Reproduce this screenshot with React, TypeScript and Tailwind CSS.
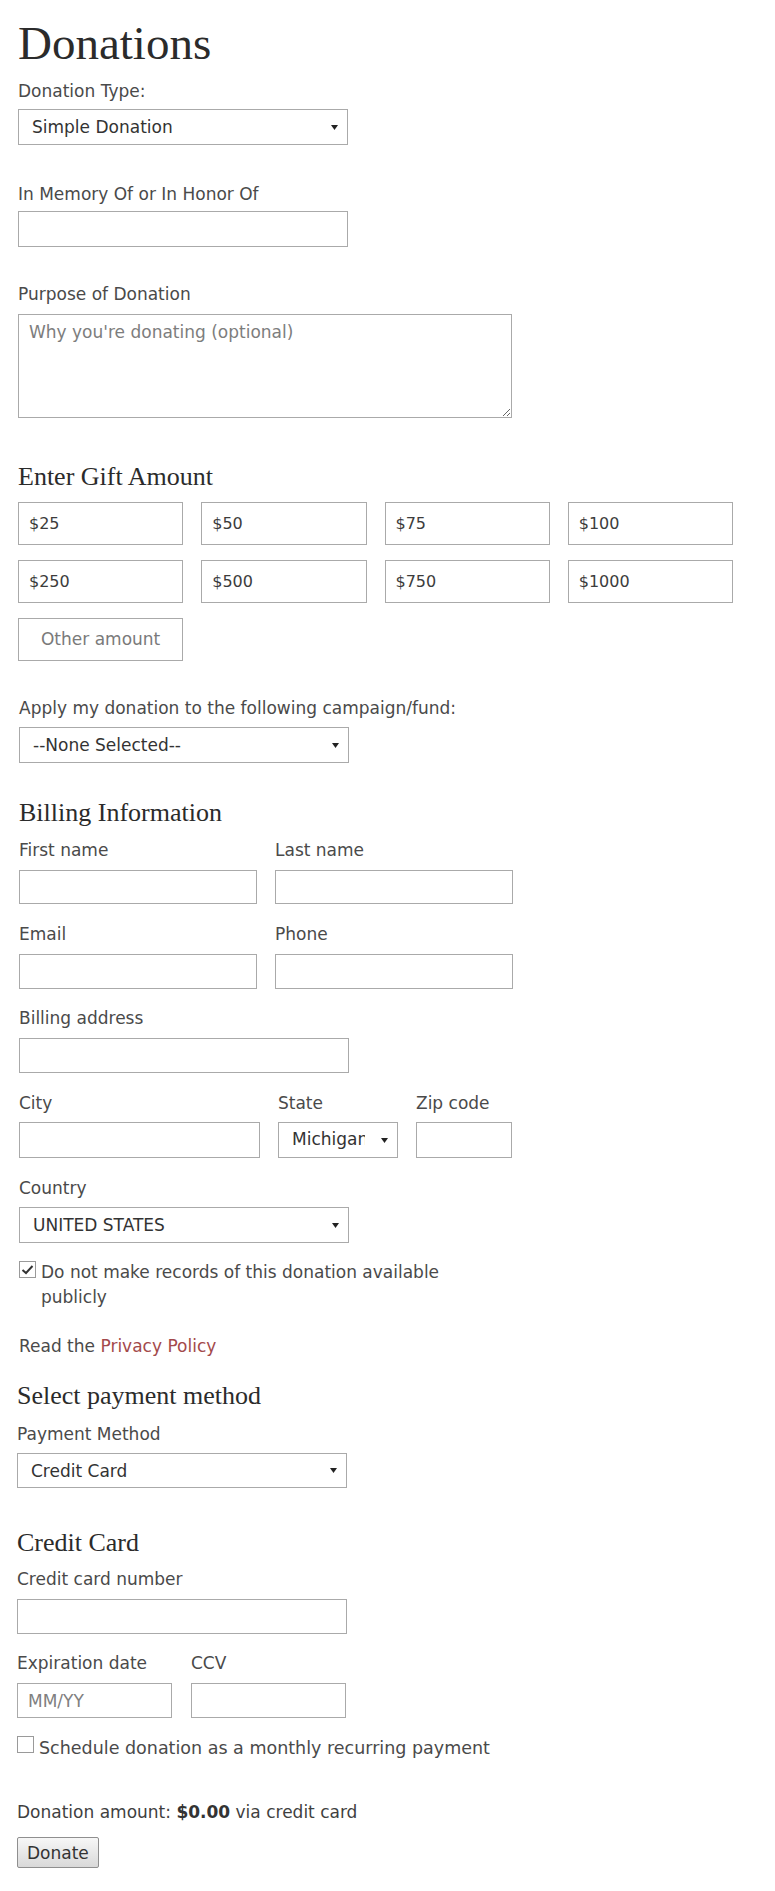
import React from "react";

const labelCls = "block text-[17px] leading-[24px] text-[#4a4a4a]";
const headingCls = "font-['Liberation_Serif',serif] text-[26px] leading-[30px] text-[#2b2b2b]";
const inputCls =
  "block border border-[#aaaaaa] bg-white px-[10px] text-[17px] text-[#333] outline-none placeholder:text-[#808080]";

function Arrow() {
  return (
    <svg width="7" height="5" viewBox="0 0 7 5" className="ml-auto shrink-0">
      <polygon points="0,0 7,0 3.5,5" fill="#222" />
    </svg>
  );
}

function FakeSelect({ value, className }: { value: string; className: string }) {
  return (
    <div
      className={`flex items-center border border-[#aaaaaa] bg-white pl-[13px] pr-[9px] text-[17px] leading-[24px] text-[#333] ${className}`}
    >
      <span className="overflow-hidden whitespace-nowrap">{value}</span>
      <Arrow />
    </div>
  );
}

function Box({ checked }: { checked?: boolean }) {
  return (
    <div className="flex h-[17px] w-[17px] shrink-0 items-center justify-center border border-[#9a9a9a] bg-white">
      {checked ? (
        <svg width="15" height="15" viewBox="0 0 15 15">
          <polyline points="2.5,8 6,11 12.5,4" fill="none" stroke="#333" strokeWidth="2" />
        </svg>
      ) : null}
    </div>
  );
}

const amounts = ["$25", "$50", "$75", "$100", "$250", "$500", "$750", "$1000"];

export default function App() {
  return (
    <div className="min-h-[1891px] bg-white pt-[18px] font-['DejaVu_Sans',sans-serif] text-[#4a4a4a]">
      {/* donation section */}
      <div className="pl-[18px]">
        <h1 className="font-['Liberation_Serif',serif] text-[47px] leading-[50px] text-[#2b2b2b]">Donations</h1>

        <div className="mt-[11px]">
          <label className={labelCls}>Donation Type:</label>
          <FakeSelect value="Simple Donation" className="mt-[6px] h-[36px] w-[330px]" />
        </div>

        <div className="mt-[37px]">
          <label className={labelCls}>In Memory Of or In Honor Of</label>
          <input className={`${inputCls} mt-[5px] h-[36px] w-[330px]`} />
        </div>

        <div className="mt-[35px]">
          <label className={labelCls}>Purpose of Donation</label>
          <textarea
            placeholder="Why you're donating (optional)"
            className="mt-[8px] block h-[104px] w-[494px] border border-[#aaaaaa] bg-white px-[10px] py-[5px] text-[17px] leading-[24px] text-[#333] outline-none placeholder:text-[#7d7d7d]"
          />
        </div>

        <h2 className={`${headingCls} mt-[44px]`}>Enter Gift Amount</h2>
        <div className="mt-[10px] grid w-[715px] grid-cols-4 gap-x-[18px] gap-y-[15px]">
          {amounts.map((a) => (
            <div
              key={a}
              className="flex h-[43px] items-center border border-[#aaaaaa] bg-white pl-[10px] text-[16px] text-[#3c3c3c]"
            >
              {a}
            </div>
          ))}
          <div className="flex h-[43px] items-center justify-center border border-[#aaaaaa] bg-white text-[17px] text-[#7a7a7a]">
            Other amount
          </div>
        </div>
      </div>

      {/* fund + billing */}
      <div className="pl-[19px]">
        <div className="mt-[35px]">
          <label className={labelCls}>Apply my donation to the following campaign/fund:</label>
          <FakeSelect value="--None Selected--" className="mt-[7px] h-[36px] w-[330px]" />
        </div>

        <h2 className={`${headingCls} mt-[35px]`}>Billing Information</h2>

        <div className="mt-[10px] flex w-[494px] gap-[18px]">
          <div className="flex-1">
            <label className={labelCls}>First name</label>
            <input className={`${inputCls} mt-[8px] h-[34px] w-full`} />
          </div>
          <div className="flex-1">
            <label className={labelCls}>Last name</label>
            <input className={`${inputCls} mt-[8px] h-[34px] w-full`} />
          </div>
        </div>

        <div className="mt-[18px] flex w-[494px] gap-[18px]">
          <div className="flex-1">
            <label className={labelCls}>Email</label>
            <input className={`${inputCls} mt-[8px] h-[35px] w-full`} />
          </div>
          <div className="flex-1">
            <label className={labelCls}>Phone</label>
            <input className={`${inputCls} mt-[8px] h-[35px] w-full`} />
          </div>
        </div>

        <div className="mt-[17px]">
          <label className={labelCls}>Billing address</label>
          <input className={`${inputCls} mt-[8px] h-[35px] w-[330px]`} />
        </div>

        <div className="mt-[18px] flex gap-[18px]">
          <div className="w-[241px]">
            <label className={labelCls}>City</label>
            <input className={`${inputCls} mt-[7px] h-[36px] w-full`} />
          </div>
          <div className="w-[120px]">
            <label className={labelCls}>State</label>
            <div className="mt-[7px] flex h-[36px] w-full items-center border border-[#aaaaaa] bg-white pl-[13px] pr-[9px] text-[17px] text-[#333]">
              <span className="w-[73px] overflow-hidden whitespace-nowrap">Michigan</span>
              <Arrow />
            </div>
          </div>
          <div className="w-[96px]">
            <label className={labelCls}>Zip code</label>
            <input className={`${inputCls} mt-[7px] h-[36px] w-full`} />
          </div>
        </div>

        <div className="mt-[18px]">
          <label className={labelCls}>Country</label>
          <FakeSelect value="UNITED STATES" className="mt-[7px] h-[36px] w-[330px]" />
        </div>

        <div className="mt-[17px] flex items-start gap-[5px]">
          <div className="mt-[1px]">
            <Box checked />
          </div>
          <p className="w-[420px] text-[17px] leading-[25px] text-[#4a4a4a]">
            Do not make records of this donation available publicly
          </p>
        </div>

        <p className="mt-[24px] text-[17px] leading-[24px]">
          Read the <span className="text-[#a3494b]">Privacy Policy</span>
        </p>
      </div>

      {/* payment */}
      <div className="pl-[17px] pb-[22px]">
        <h2 className={`${headingCls} mt-[23px]`}>Select payment method</h2>
        <div className="mt-[11px]">
          <label className={labelCls}>Payment Method</label>
          <FakeSelect value="Credit Card" className="mt-[7px] h-[35px] w-[330px]" />
        </div>

        <h2 className={`${headingCls} mt-[40px]`}>Credit Card</h2>
        <div className="mt-[9px]">
          <label className={labelCls}>Credit card number</label>
          <input className={`${inputCls} mt-[8px] h-[35px] w-[330px]`} />
        </div>

        <div className="mt-[17px] flex gap-[19px]">
          <div className="w-[155px]">
            <label className={labelCls}>Expiration date</label>
            <input placeholder="MM/YY" className={`${inputCls} mt-[8px] h-[35px] w-full`} />
          </div>
          <div className="w-[155px]">
            <label className={labelCls}>CCV</label>
            <input className={`${inputCls} mt-[8px] h-[35px] w-full`} />
          </div>
        </div>

        <div className="mt-[18px] flex items-start gap-[5px]">
          <Box />
          <span className="text-[17.5px] leading-[24px] text-[#4a4a4a]">
            Schedule donation as a monthly recurring payment
          </span>
        </div>

        <p className="mt-[40px] text-[17px] leading-[24px] text-[#3f3f3f]">
          Donation amount: <span className="font-bold text-[#333]">$0.00</span> via credit card
        </p>
        <button className="mt-[13px] h-[31px] rounded-[2px] border border-[#8f8f8f] bg-linear-to-b from-[#f7f7f7] to-[#d9d9d9] px-[9px] text-[17px] leading-[24px] text-[#333]">
          Donate
        </button>
      </div>
    </div>
  );
}
